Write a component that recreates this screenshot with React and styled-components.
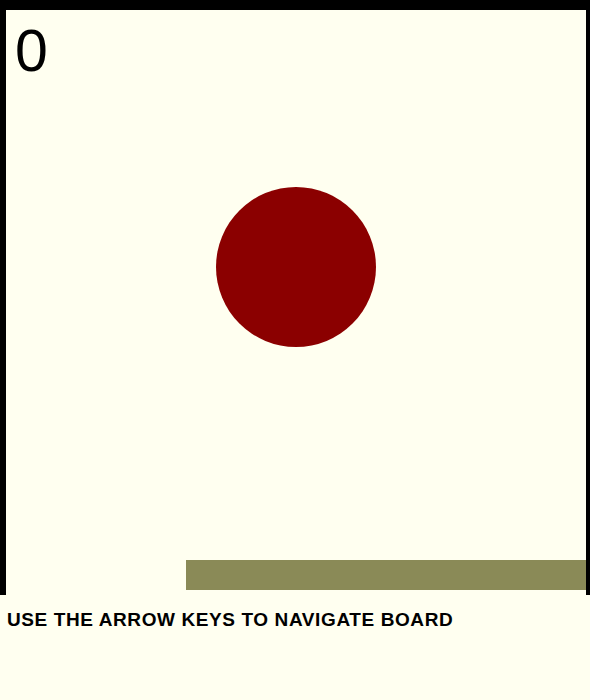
import React from 'react';
import styled, { createGlobalStyle } from 'styled-components';

const GlobalStyle = createGlobalStyle`
  html, body {
    margin: 0;
    padding: 0;
    background: #fffff0;
    font-family: "Liberation Sans", Arial, sans-serif;
  }
`;

// black frame round the board (thicker on top and left)
const Frame = styled.div`
  background: #000;
  padding: 10px 4px 0 6px;
  width: 580px;
`;

const Board = styled.div`
  position: relative;
  width: 580px;
  height: 585px;
  background: #fffff0;
  overflow: hidden;
`;

const Score = styled.div`
  position: absolute;
  left: 9px;
  top: 12px;
  font-size: 59px;
  line-height: 1;
  color: #000;
`;

const Ball = styled.div`
  position: absolute;
  width: ${(p) => p.size}px;
  height: ${(p) => p.size}px;
  border-radius: 50%;
  background: #8b0000;
`;

const Paddle = styled.div`
  position: absolute;
  width: 400px;
  height: 30px;
  background: #8a8a57;
`;

const Hint = styled.p`
  margin: 0;
  padding: 14px 0 0 7px;
  font-size: 19px;
  letter-spacing: 0.6px;
  font-weight: bold;
  color: #000;
`;

export default function App() {
  const ball = { x: 210, y: 177 };
  const paddle = { x: 180, y: 550 };

  return (
    <>
      <GlobalStyle />
      <Frame>
        <Board>
          <Score>0</Score>
          <Ball size={160} style={{ left: ball.x, top: ball.y }} />
          <Paddle style={{ left: paddle.x, top: paddle.y }} />
        </Board>
      </Frame>
      <Hint>USE THE ARROW KEYS TO NAVIGATE BOARD</Hint>
    </>
  );
}
